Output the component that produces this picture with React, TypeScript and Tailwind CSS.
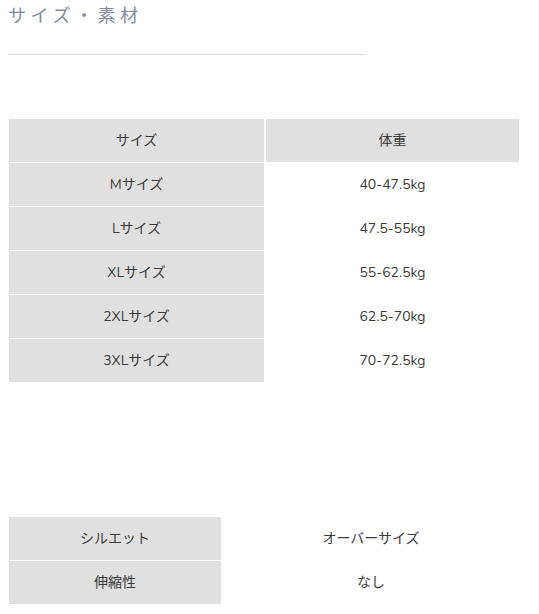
const sizeRows = [
  { size: 'Mサイズ', weight: '40-47.5kg' },
  { size: 'Lサイズ', weight: '47.5-55kg' },
  { size: 'XLサイズ', weight: '55-62.5kg' },
  { size: '2XLサイズ', weight: '62.5-70kg' },
  { size: '3XLサイズ', weight: '70-72.5kg' },
];

const materialRows = [
  { label: 'シルエット', value: 'オーバーサイズ' },
  { label: '伸縮性', value: 'なし' },
];

const font = { fontFamily: '"Nunito", "Lato", "Noto Sans CJK JP", sans-serif' };

export default function App() {
  return (
    <div className="w-[539px] h-[614px] bg-white text-[#3a3a3a]" style={font}>
      {/* Title */}
      <div className="pl-2 pt-[4px]">
        <h2 className="text-[18px] leading-[24px] tracking-[4.5px] text-[#7f8ca0]">
          サイズ・素材
        </h2>
        <div className="mt-[26px] w-[358px] h-px bg-[#dcdcdc]" />
      </div>

      {/* Size table */}
      <div className="mt-[64px] ml-[9px] w-[510px] flex flex-col gap-px">
        <div className="flex gap-[2px] h-[43px]">
          <div className="w-[255px] bg-[#e0e0e0] flex items-center justify-center text-[14px]">
            サイズ
          </div>
          <div className="flex-1 bg-[#e0e0e0] flex items-center justify-center text-[14px]">
            体重
          </div>
        </div>
        {sizeRows.map((row) => (
          <div key={row.size} className="flex gap-[2px] h-[43px]">
            <div className="w-[255px] bg-[#e0e0e0] flex items-center justify-center text-[14px]">
              {row.size}
            </div>
            <div className="flex-1 flex items-center justify-center text-[14px]">
              {row.weight}
            </div>
          </div>
        ))}
      </div>

      {/* Material table */}
      <div className="mt-[135px] ml-[9px] w-[510px] flex flex-col gap-px">
        {materialRows.map((row) => (
          <div key={row.label} className="flex gap-[2px] h-[43px]">
            <div className="w-[212px] bg-[#e0e0e0] flex items-center justify-center text-[14px]">
              {row.label}
            </div>
            <div className="flex-1 flex items-center justify-center text-[14px]">
              {row.value}
            </div>
          </div>
        ))}
      </div>
    </div>
  );
}
